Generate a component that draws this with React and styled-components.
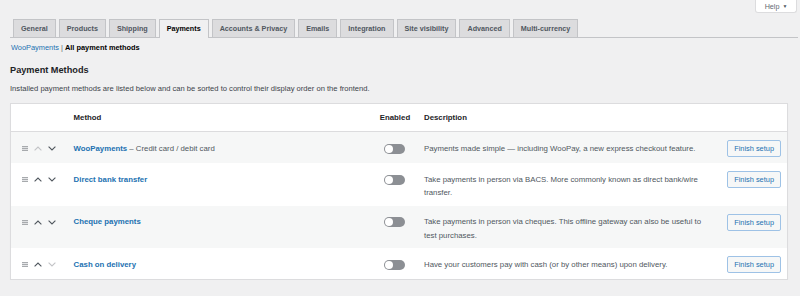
import styled, { createGlobalStyle, css } from "styled-components";

const GlobalStyle = createGlobalStyle`
  html, body {
    margin: 0;
    background: #f0f0f1;
  }
  body {
    font-family: "Liberation Sans", Arial, sans-serif;
    color: #3c434a;
  }
  * { box-sizing: border-box; }
`;

const HelpBar = styled.div`
  display: flex;
  justify-content: flex-end;
  padding-right: 3px;
`;

const HelpTab = styled.button`
  width: 42px;
  height: 13px;
  padding: 0;
  border: 1px solid #dcdcde;
  border-top: none;
  border-radius: 0 0 3px 3px;
  background: #fff;
  color: #646970;
  font: 7.2px "Liberation Sans", Arial, sans-serif;
  display: flex;
  align-items: center;
  justify-content: center;
  gap: 3px;
  span { font-size: 5px; color: #50575e; }
`;

const TabNav = styled.nav`
  display: flex;
  margin: 6px 2px 0 10px;
  height: 19px;
  border-bottom: 1px solid #c3c4c7;
`;

const Tab = styled.a`
  margin-left: 3px;
  padding: 0 7px;
  height: 18px;
  line-height: 17px;
  border: 1px solid #c3c4c7;
  border-bottom: none;
  background: #dcdcde;
  color: #50575e;
  font-size: 7.2px;
  font-weight: 700;
  white-space: nowrap;
  ${({ $active }) =>
    $active &&
    css`
      background: #f0f0f1;
      color: #000;
      height: 19px;
      margin-bottom: -1px;
    `}
`;

const SubNav = styled.div`
  margin: 5px 0 0 11px;
  font-size: 7.4px;
  line-height: 10px;
  color: #646970;
  a { color: #2271b1; }
  strong { color: #000; }
`;

const Heading = styled.h2`
  margin: 11px 0 0 10px;
  font-size: 9.2px;
  line-height: 12px;
  font-weight: 700;
  color: #1d2327;
`;

const Intro = styled.p`
  margin: 8px 0 0 10px;
  font-size: 7.6px;
  line-height: 10px;
  color: #3c434a;
`;

const Table = styled.table`
  margin: 9px 12px 0 10px;
  width: 778px;
  table-layout: fixed;
  border-collapse: collapse;
  background: #fff;
  border: 1px solid #dcdcde;
  box-shadow: 0 1px 1px rgba(0, 0, 0, 0.04);
`;

const Th = styled.th`
  padding: 7px ${({ $padR }) => $padR || 0}px 7px ${({ $padL }) => $padL || 0}px;
  line-height: 13px;
  font-size: 7.8px;
  font-weight: 700;
  color: #1d2327;
  text-align: ${({ $align }) => $align || "left"};
  border-bottom: 1px solid #dcdcde;
`;

const Row = styled.tr`
  background: ${({ $shade }) => ($shade ? "#f6f7f7" : "#fff")};
`;

const Td = styled.td`
  vertical-align: top;
  padding: 8px ${({ $padR }) => $padR || 0}px 6px ${({ $padL }) => $padL || 0}px;
  text-align: ${({ $align }) => $align || "left"};
  font-size: 7.8px;
  line-height: 13.5px;
`;

const Line = styled.div`
  padding-top: 1.5px;
  font-size: 7.8px;
  line-height: 13.5px;
  color: #50575e;
`;

const MethodName = styled.a`
  color: #2271b1;
  font-weight: 700;
`;

const Controls = styled.div`
  height: 17px;
  display: flex;
  align-items: center;
  gap: 6px;
`;

const Cell17 = styled.div`
  height: 17px;
  display: flex;
  align-items: center;
  justify-content: center;
`;

const Toggle = styled.span`
  position: relative;
  width: 21px;
  height: 10px;
  border-radius: 5px;
  background: #8c8f94;
  &::after {
    content: "";
    position: absolute;
    left: 1px;
    top: 1px;
    width: 8px;
    height: 8px;
    border-radius: 50%;
    background: #fff;
  }
`;

const Actions = styled.div`
  display: flex;
  justify-content: flex-end;
`;

const SetupButton = styled.button`
  display: block;
  height: 17px;
  padding: 0 6px;
  border: 1px solid #9ec2e6;
  border-radius: 2px;
  background: #f6f7f7;
  color: #2271b1;
  font: 7.4px "Liberation Sans", Arial, sans-serif;
  white-space: nowrap;
`;

const Handle = () => (
  <svg width="6" height="5" viewBox="0 0 6 5">
    <rect y="0" width="6" height="1.2" fill="#a7aaad" />
    <rect y="1.9" width="6" height="1.2" fill="#a7aaad" />
    <rect y="3.8" width="6" height="1.2" fill="#a7aaad" />
  </svg>
);

const Chevron = ({ up, off }) => (
  <svg width="8" height="5" viewBox="0 0 8 5">
    <path
      d={up ? "M0.6 4.4 L4 1 L7.4 4.4" : "M0.6 0.6 L4 4 L7.4 0.6"}
      fill="none"
      stroke={off ? "#c3c4c7" : "#50575e"}
      strokeWidth="1.1"
    />
  </svg>
);

const tabs = [
  "General",
  "Products",
  "Shipping",
  "Payments",
  "Accounts & Privacy",
  "Emails",
  "Integration",
  "Site visibility",
  "Advanced",
  "Multi-currency",
];

const methods = [
  {
    name: "WooPayments",
    extra: " – Credit card / debit card",
    desc: "Payments made simple — including WooPay, a new express checkout feature.",
    upOff: true,
  },
  {
    name: "Direct bank transfer",
    desc: "Take payments in person via BACS. More commonly known as direct bank/wire transfer.",
  },
  {
    name: "Cheque payments",
    desc: "Take payments in person via cheques. This offline gateway can also be useful to test purchases.",
  },
  {
    name: "Cash on delivery",
    desc: "Have your customers pay with cash (or by other means) upon delivery.",
    downOff: true,
  },
];

export default function App() {
  return (
    <>
      <GlobalStyle />
      <HelpBar>
        <HelpTab>
          Help <span>▼</span>
        </HelpTab>
      </HelpBar>
      <TabNav>
        {tabs.map((t) => (
          <Tab key={t} $active={t === "Payments"}>
            {t}
          </Tab>
        ))}
      </TabNav>
      <SubNav>
        <a>WooPayments</a> | <strong>All payment methods</strong>
      </SubNav>
      <Heading>Payment Methods</Heading>
      <Intro>
        Installed payment methods are listed below and can be sorted to control
        their display order on the frontend.
      </Intro>
      <Table>
        <colgroup>
          <col style={{ width: 63 }} />
          <col style={{ width: 298 }} />
          <col style={{ width: 46 }} />
          <col style={{ width: 302 }} />
          <col style={{ width: 67 }} />
        </colgroup>
        <thead>
          <tr>
            <Th />
            <Th>Method</Th>
            <Th $align="center">Enabled</Th>
            <Th $padL={6}>Description</Th>
            <Th />
          </tr>
        </thead>
        <tbody>
          {methods.map((m, i) => (
            <Row key={m.name} $shade={i % 2 === 0}>
              <Td $padL={11}>
                <Controls>
                  <Handle />
                  <Chevron up off={m.upOff} />
                  <Chevron off={m.downOff} />
                </Controls>
              </Td>
              <Td>
                <Line>
                  <MethodName>{m.name}</MethodName>
                  {m.extra}
                </Line>
              </Td>
              <Td>
                <Cell17>
                  <Toggle />
                </Cell17>
              </Td>
              <Td $padL={6} $padR={10}>
                <Line>{m.desc}</Line>
              </Td>
              <Td $padR={6}>
                <Actions>
                  <SetupButton>Finish setup</SetupButton>
                </Actions>
              </Td>
            </Row>
          ))}
        </tbody>
      </Table>
    </>
  );
}
